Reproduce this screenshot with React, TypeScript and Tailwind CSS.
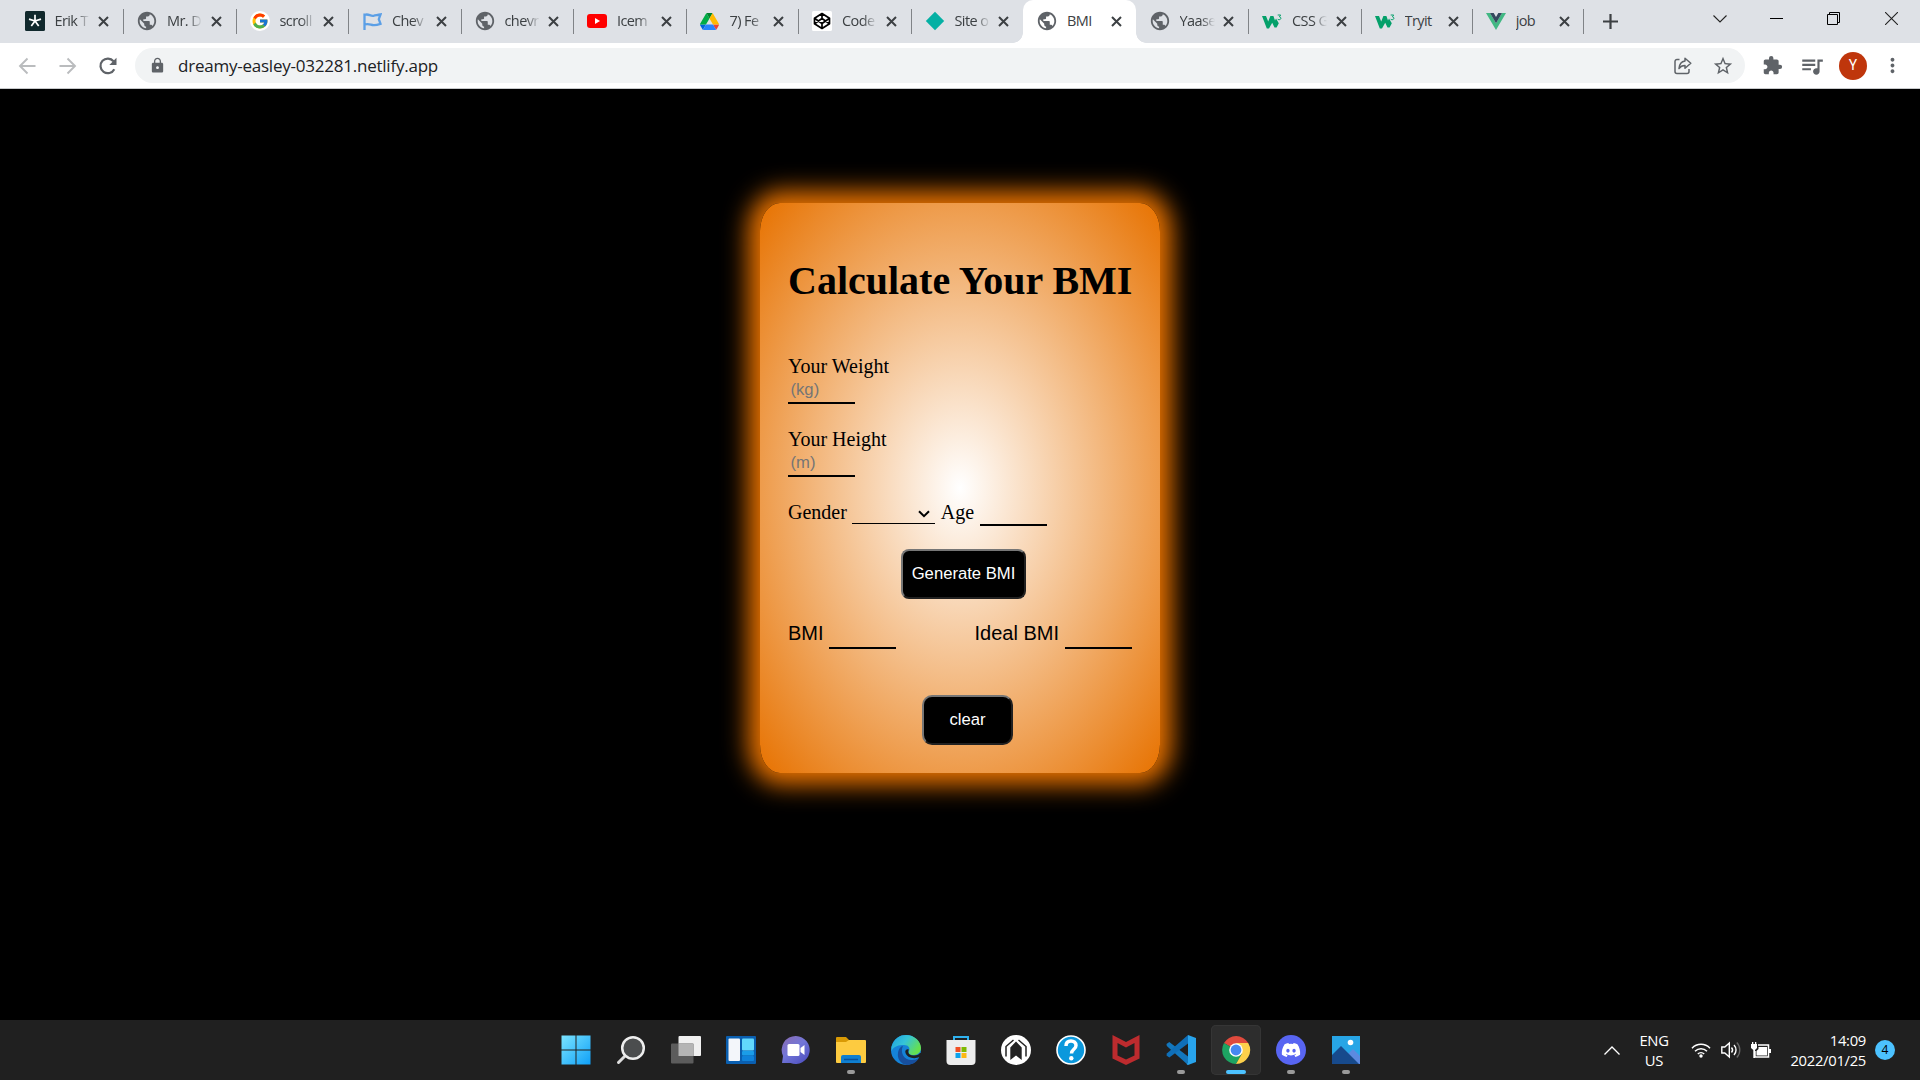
import React from 'react';
import { FcGoogle } from 'react-icons/fc';
import { FaDiscord } from 'react-icons/fa';
import { MdLock, MdExtension, MdQueueMusic, MdMoreVert, MdStarBorder, MdPublic } from 'react-icons/md';

const Globe = () => <MdPublic size={22} color="#5f6368" className="shrink-0" />;

const W3 = () => (
  <svg className="h-[15px] w-5" viewBox="0 0 20 15">
    <path d="M0 2h4l2.200 5.400L8.400 2h3l1.600 4.600L14 4.400l2.800 4.800-2.200 4.300h-2.100l-2.300-4.800L7 14.500H4.800z" fill="#04a06a" />
    <path d="M15.700 1h3l-1.300 1.800c2.200.2 1.900 3.100-.5 2.900-.7 0-1.100-.3-1.300-.8" fill="none" stroke="#04a06a" strokeWidth="1" />
  </svg>
);

const Drive = () => (
  <svg className="h-[17px] w-[19px]" viewBox="0 0 87.300 78">
    <path d="m6.600 66.850 3.850 6.650c.8 1.400 1.950 2.500 3.300 3.300l13.750-23.800h-27.500c0 1.550.4 3.100 1.200 4.500z" fill="#0066da" />
    <path d="m43.650 25-13.750-23.800c-1.350.8-2.500 1.900-3.300 3.300l-25.400 44a9.060 9.060 0 0 0 -1.200 4.500h27.500z" fill="#00ac47" />
    <path d="m73.550 76.800c1.350-.8 2.500-1.900 3.300-3.300l1.600-2.750 7.650-13.250c.8-1.400 1.200-2.950 1.200-4.500h-27.500l5.850 11.500z" fill="#ea4335" />
    <path d="m43.650 25 13.750-23.800c-1.350-.8-2.900-1.200-4.500-1.200h-18.500c-1.600 0-3.150.45-4.500 1.200z" fill="#00832d" />
    <path d="m59.800 53h-32.300l-13.750 23.800c1.350.8 2.900 1.200 4.500 1.200h50.800c1.600 0 3.150-.45 4.500-1.200z" fill="#2684fc" />
    <path d="m73.400 26.500-12.700-22c-.8-1.400-1.950-2.500-3.300-3.300l-13.750 23.800 16.150 28h27.450c0-1.550-.4-3.100-1.200-4.500z" fill="#ffba00" />
  </svg>
);

const tabs: { title: string; icon: React.ReactNode; active?: boolean }[] = [
  {
    title: 'Erik T',
    icon: (
      <svg className="size-5" viewBox="0 0 20 20">
        <rect width="20" height="20" rx="1.500" fill="#10282c" />
        <path d="M10 10V3.800M10 10l6-1.900M10 10l3.700 5M10 10l-3.700 5M10 10L4 8.100" stroke="#fff" strokeWidth="1.700" />
      </svg>
    ),
  },
  { title: 'Mr. D', icon: <Globe /> },
  {
    title: 'scroll',
    icon: (
      <span className="flex size-5 items-center justify-center rounded-full bg-white">
        <FcGoogle size={18} />
      </span>
    ),
  },
  {
    title: 'Chev',
    icon: (
      <svg className="h-[19px] w-[19px]" viewBox="0 0 19 19">
        <path d="M1.500 18V1.500M1.500 3c4-1.800 5.500 1.400 9 .8 2-.3 4-.8 7-1.300l-1.700 4.700 1.700 4.600c-3 1-5 1.500-7 1.300-3-.3-5-2-9-.6" fill="none" stroke="#5b9fe6" strokeWidth="2.300" />
      </svg>
    ),
  },
  { title: 'chevr', icon: <Globe /> },
  {
    title: 'Icem',
    icon: (
      <svg className="h-[14px] w-5" viewBox="0 0 20 14">
        <rect width="20" height="14" rx="3" fill="#f00" />
        <path d="M8 4l5 3-5 3z" fill="#fff" />
      </svg>
    ),
  },
  { title: '7) Fe', icon: <Drive /> },
  {
    title: 'Code',
    icon: (
      <svg className="size-5" viewBox="0 0 20 20">
        <rect width="20" height="20" rx="1.500" fill="#fff" />
        <path d="M10 2.500l7.500 4.800v5.400L10 17.500l-7.500-4.800V7.300zM2.500 7.300L10 12.500l7.500-5.200M2.500 12.700L10 7.500l7.500 5.200M10 2.500v5M10 12.500v5" fill="none" stroke="#000" strokeWidth="1.700" strokeLinejoin="round" />
      </svg>
    ),
  },
  {
    title: 'Site o',
    icon: (
      <svg className="size-5" viewBox="0 0 20 20">
        <path d="M10 .8L19.200 10 10 19.200.8 10z" fill="#05b0a4" />
      </svg>
    ),
  },
  { title: 'BMI', icon: <Globe />, active: true },
  { title: 'Yaase', icon: <Globe /> },
  { title: 'CSS G', icon: <W3 /> },
  { title: 'Tryit', icon: <W3 /> },
  {
    title: 'job',
    icon: (
      <svg className="h-[17px] w-5" viewBox="0 0 20 17">
        <path d="M0 0h4l6 10.300L16 0h4L10 17z" fill="#41b883" />
        <path d="M4 0h3.700L10 4l2.300-4H16l-6 10.300z" fill="#34495e" />
      </svg>
    ),
  },
];

function TabStrip() {
  return (
    <div className="flex h-[43px] bg-[#dee1e6] pl-[10.5px] font-['Open_Sans',sans-serif]">
      {tabs.map((t, i) => (
        <div
          key={i}
          className={`relative flex h-[43px] shrink-0 items-center pb-[1px] ${i > 11 ? 'w-[111.2px]' : 'w-[112.5px]'} ${t.active ? 'rounded-t-[10px] bg-white' : ''}`}
        >
          <span className="ml-3.5 flex w-5 shrink-0 justify-center">{t.icon}</span>
          <span className={`ml-2.5 w-[35px] overflow-hidden pb-px text-[14.5px] tracking-[-0.6px] whitespace-nowrap text-[#3c4043] ${['BMI', 'Tryit', 'job'].includes(t.title) ? '' : '[mask-image:linear-gradient(to_right,#000_60%,transparent)]'}`}>
            {t.title}
          </span>
          <svg className="ml-[8.5px] size-[11px]" viewBox="0 0 11 11">
            <path d="M1 1l9 9M10 1l-9 9" stroke="#3c4043" strokeWidth="2" />
          </svg>
          {!t.active && tabs[i + 1]?.active !== true && (
            <span className="absolute top-[9px] right-[-1px] h-[25px] w-px bg-[#808387]" />
          )}
          {t.active && (
            <>
              <span className="absolute bottom-0 -left-2.5 size-2.5 bg-[radial-gradient(circle_at_0_0,transparent_9.5px,#fff_10px)]" />
              <span className="absolute -right-2.5 bottom-0 size-2.5 bg-[radial-gradient(circle_at_100%_0,transparent_9.5px,#fff_10px)]" />
            </>
          )}
        </div>
      ))}
      <svg className="mt-[14px] ml-[20px] size-[15px]" viewBox="0 0 15 15">
        <path d="M7.500 0v15M0 7.500h15" stroke="#3c4043" strokeWidth="2.200" />
      </svg>
      <div className="mr-[22px] ml-auto flex h-[37px] items-center">
        <svg className="mr-[43px] h-2 w-[14px]" viewBox="0 0 14 8">
          <path d="M.5.500L7 7 13.500.5" fill="none" stroke="#222" strokeWidth="1.100" />
        </svg>
        <span className="mr-[44px] h-px w-[13px] bg-black" />
        <svg className="mr-[45px] size-[13px]" viewBox="0 0 13 13">
          <path d="M.5 2.500h10v10H.5zM2.500 2.500v-2h10v10h-2" fill="none" stroke="#000" />
        </svg>
        <svg className="size-[13px]" viewBox="0 0 13 13">
          <path d="M0 0l13 13M13 0L0 13" stroke="#222" strokeWidth="1.100" />
        </svg>
      </div>
    </div>
  );
}

function AddressBar() {
  return (
    <div className="flex h-[46px] items-center border-b border-[#c8cacc] bg-white pl-[18px]">
      <svg className="h-[18px] w-[18px]" viewBox="0 0 18 18">
        <path d="M17.500 9H2M9.500 1.500L2 9l7.500 7.500" fill="none" stroke="#babcbe" strokeWidth="1.900" />
      </svg>
      <svg className="ml-[23px] h-[18px] w-[18px]" viewBox="0 0 18 18">
        <path d="M.5 9H16M8.500 1.500L16 9l-7.500 7.500" fill="none" stroke="#babcbe" strokeWidth="1.900" />
      </svg>
      <svg className="ml-[22px] size-[18px]" viewBox="0 0 18 18">
        <path d="M15.300 12.200A7.300 7.300 0 1 1 14.500 4.300" fill="none" stroke="#5f6368" strokeWidth="2.200" />
        <path d="M17.500.8v7.200h-7.200z" fill="#5f6368" />
      </svg>
      <div className="ml-[18px] flex h-[35px] w-[1610px] items-center rounded-full bg-[#f1f3f4] pr-[11px] pl-[14px]">
        <MdLock size={17} color="#5f6368" />
        <span className="ml-3 font-['Open_Sans',sans-serif] text-[17px] tracking-[-0.23px] text-[#202124]">
          dreamy-easley-032281.netlify.app
        </span>
        <svg className="ml-auto size-[18px]" viewBox="0 0 18 18">
          <path d="M5.500 2.500H3A2 2 0 0 0 1 4.500v10a2 2 0 0 0 2 2h10a2 2 0 0 0 2-2V12" fill="none" stroke="#5f6368" strokeWidth="1.500" />
          <path d="M11 1.300l5.800 5-5.800 5V8.500c-2.800 0-4.600.8-6 3C5.300 7.800 7.300 4.500 11 4z" fill="none" stroke="#5f6368" strokeWidth="1.500" strokeLinejoin="round" />
        </svg>
        <MdStarBorder className="ml-[20px]" size={22} color="#5f6368" />
      </div>
      <MdExtension className="ml-[17px]" size={21} color="#5f6368" />
      <MdQueueMusic className="ml-[16px]" size={26} color="#5f6368" />
      <span className="ml-[14px] flex size-7 items-center justify-center rounded-full bg-[#bf360c] font-[Roboto,sans-serif] text-[14px] text-white">
        Y
      </span>
      <MdMoreVert className="ml-[14px]" size={23} color="#5f6368" />
    </div>
  );
}

const line = 'w-[67px] border-b-2 border-black bg-transparent outline-none';
const sans = "font-['Liberation_Sans',sans-serif]";

function Card() {
  return (
    <div className="h-[570px] w-[400px] rounded-[5%] bg-[radial-gradient(#fff,#e77200)] px-7 font-['Liberation_Serif',serif] text-[20px] leading-[23px] text-black shadow-[0_0_25px_12px_#e77200]">
      <h1 className="pt-[55px] text-[40px] leading-[46px] font-bold whitespace-nowrap">Calculate Your BMI</h1>
      <div className="mt-[51px]">Your Weight</div>
      <input placeholder="(kg)" className={`${line} ${sans} block h-[26px] px-[2.5px] pb-px text-[16.67px] placeholder:text-[#757575]`} />
      <div className="mt-6">Your Height</div>
      <input placeholder="(m)" className={`${line} ${sans} block h-[26px] px-[2.5px] pb-px text-[16.67px] placeholder:text-[#757575]`} />
      <div className="mt-[22px] flex h-[28px]">
        <span className="pt-[2px]">Gender</span>
        <span className="ml-[5px] flex h-[25px] w-[83px] items-center justify-end border-b border-black pr-[5px]">
          <svg className="mt-1.5 h-2 w-3" viewBox="0 0 12 8">
            <path d="M1 1.200l5 5 5-5" fill="none" stroke="#000" strokeWidth="2" />
          </svg>
        </span>
        <span className="ml-[6px] pt-[2px]">Age</span>
        <input className={`${line} ml-[6px] h-[27px]`} />
      </div>
      <button className={`${sans} mt-[22px] ml-[113px] block h-[50px] w-[125px] rounded-[8px] border-2 border-t-[#767676] border-r-[#212121] border-b-[#212121] border-l-[#767676] bg-black pb-[2px] text-[16.67px] whitespace-nowrap text-white`}>
        Generate BMI
      </button>
      <div className={`${sans} mt-[22px] flex h-[28px] justify-between`}>
        <label className="flex gap-[5px]">
          <span className="pt-px">BMI</span>
          <input className={`${line} h-[28px]`} />
        </label>
        <label className="flex gap-[6px]">
          <span className="pt-px">Ideal BMI</span>
          <input className={`${line} h-[28px]`} />
        </label>
      </div>
      <button className={`${sans} mt-[46px] ml-[134px] block h-[50px] w-[91px] rounded-[10px] border-2 border-t-[#767676] border-r-[#212121] border-b-[#212121] border-l-[#767676] bg-black pb-[2px] text-[16.67px] text-white`}>
        clear
      </button>
    </div>
  );
}

const apps: { icon: React.ReactNode; state?: 'open' | 'active' }[] = [
  {
    icon: (
      <svg viewBox="0 0 30 30">
        <defs>
          <linearGradient id="win" x1="0" y1="0" x2="1" y2="1">
            <stop offset="0" stopColor="#7be4ff" />
            <stop offset="1" stopColor="#0fa0f8" />
          </linearGradient>
        </defs>
        <path d="M.500.500h14v14H.500zM15.500.500h14v14h-14zM.500 15.500h14v14H.500zM15.500 15.500h14v14h-14z" fill="url(#win)" />
      </svg>
    ),
  },
  {
    icon: (
      <svg viewBox="0 0 30 30">
        <path d="M9 21l-6.500 6.500" stroke="#ddd" strokeWidth="3" strokeLinecap="round" />
        <circle cx="17" cy="13" r="10.800" fill="#4b4d4e" stroke="#eee" strokeWidth="2.500" />
      </svg>
    ),
  },
  {
    icon: (
      <svg viewBox="0 0 30 30">
        <rect x="7.500" y="1" width="22.500" height="20" rx="1" fill="#f0f0f0" />
        <rect x="0" y="8.500" width="22.500" height="20" rx="1" fill="#5c5c5c" />
        <path d="M7.500 8.500h15V21h-15z" fill="#b5b5b5" />
      </svg>
    ),
  },
  {
    icon: (
      <svg viewBox="0 0 30 30">
        <rect y="1" width="30" height="28" rx="1" fill="#0a5fb0" />
        <rect x="2.500" y="3.500" width="11.500" height="22.500" rx="1" fill="#f3f6fa" />
        <rect x="16" y="3.500" width="12" height="12" rx="1" fill="#62d8fc" />
        <rect x="16" y="16" width="12" height="4.500" rx="1" fill="#1b9de8" />
        <rect x="16" y="21" width="12" height="5" rx="1" fill="#0f82da" />
      </svg>
    ),
  },
  {
    icon: (
      <svg viewBox="0 0 30 30">
        <defs>
          <linearGradient id="chat" x1="0" y1="0" x2="0.800" y2="1">
            <stop offset="0" stopColor="#8c6bb0" />
            <stop offset=".5" stopColor="#7276d8" />
            <stop offset="1" stopColor="#4f50c0" />
          </linearGradient>
        </defs>
        <path d="M15 1a14 14 0 1 1-5.500 27H1l1-7A14 14 0 0 1 15 1z" fill="url(#chat)" />
        <rect x="6.500" y="9" width="12" height="12" rx="1.500" fill="#fff" />
        <path d="M19.500 13l4-3v10l-4-3z" fill="#fff" />
      </svg>
    ),
  },
  {
    state: 'open',
    icon: (
      <svg viewBox="0 0 30 30">
        <path d="M0 3a1 1 0 0 1 1-1h9l3 3v6H0z" fill="#d99a05" />
        <path d="M0 7h10l3-2h16a1 1 0 0 1 1 1v21a1 1 0 0 1-1 1H1a1 1 0 0 1-1-1z" fill="#fdcb40" />
        <path d="M5 28v-6a2 2 0 0 1 2-2h16a2 2 0 0 1 2 2v6z" fill="#0f7fd0" />
        <path d="M8 24.500h14" stroke="#07519c" strokeWidth="1.500" />
      </svg>
    ),
  },
  {
    icon: (
      <svg viewBox="0 0 30 30">
        <defs>
          <linearGradient id="edge" x1="0" y1="0" x2="1" y2=".5">
            <stop offset="0" stopColor="#1c9fe0" />
            <stop offset=".5" stopColor="#35c4d8" />
            <stop offset="1" stopColor="#65e04f" />
          </linearGradient>
        </defs>
        <circle cx="15" cy="15" r="15" fill="#1583d8" />
        <path d="M.5 12C3 3 9 0 15 0c8.500 0 15 6.500 15 13 0 4-3 7-7 7-5 0-6-2-5-4 1.500-3-.5-6-5-6C8 10 2.500 11 .5 16z" fill="url(#edge)" />
        <path d="M12 11c-3 6 0 14 9 14 3 0 5-1 7-2-3 5-8 7-12 7-7-1-10-7-9-12 .5-4 3-7 5-7z" fill="#174f9d" />
        <path d="M17.800 14.500c-1.500 3.500.2 6 5.200 6 2.500 0 4.500-.7 6-2.500l1.500 0v3.500l-2.200.5c-4.500 2.500-13 1-14-5-.2-2 1.500-3.500 3.500-2.500z" fill="#202020" />
      </svg>
    ),
  },
  {
    icon: (
      <svg viewBox="0 0 30 30">
        <path d="M8 6V2h14v4" fill="none" stroke="#2fb2ef" strokeWidth="2" />
        <path d="M.5 5h29v21a4 4 0 0 1-4 4h-21a4 4 0 0 1-4-4z" fill="#ededed" />
        <path d="M9.500 12h5v5h-5z" fill="#f04f24" />
        <path d="M15.500 12h5v5h-5z" fill="#7fb900" />
        <path d="M9.500 18h5v5h-5z" fill="#0ea3ec" />
        <path d="M15.500 18h5v5h-5z" fill="#fdb813" />
      </svg>
    ),
  },
  {
    icon: (
      <svg viewBox="0 0 30 30">
        <circle cx="15" cy="15" r="15" fill="#fff" />
        <path d="M5 21.500V11.500L12.500 5M25 21.500V11.500L17.500 5" fill="none" stroke="#222" strokeWidth="1.500" />
        <path d="M9.300 25V12.500L15 6.500l5.700 6V25L15 20.500z" fill="#222" />
      </svg>
    ),
  },
  {
    icon: (
      <svg viewBox="0 0 30 30">
        <circle cx="15" cy="15" r="14" fill="#0b98dc" stroke="#fff" strokeWidth="1.600" />
        <path d="M10 11c0-3.500 2.200-5 5-5s5 1.700 5 4.500c0 4-4.500 3.500-4.500 8" fill="none" stroke="#fff" strokeWidth="3.500" />
        <circle cx="15.300" cy="23.300" r="2.200" fill="#fff" />
      </svg>
    ),
  },
  {
    icon: (
      <svg viewBox="0 0 30 30">
        <path d="M1.500 0L15 7 28.500 0v23.500L15 30 1.500 23.500zM6.500 8v12.500L15 24.500l8.500-4V8L15 12.500z" fill="#bd2b2e" fillRule="evenodd" />
      </svg>
    ),
  },
  {
    state: 'open',
    icon: (
      <svg viewBox="0 0 30 30">
        <path d="M.5 9l2.800-2L22 21.500V30L.8 11z" fill="#1377bd" />
        <path d="M.5 20.500l2.800 2L22 8.500V0L.8 18.500z" fill="#0f6fb8" />
        <path d="M22 0l8 3v24l-8 3-1.500-1L22 28z" fill="#28a4ec" />
      </svg>
    ),
  },
  {
    state: 'active',
    icon: (
      <svg viewBox="0 0 30 30">
        <path d="M15 15L3 8a14 14 0 0 1 24.200 0z" fill="#e04a3d" />
        <path d="M15 15h0L3 8a14 14 0 0 0 12 21l6-10.500z" fill="#1da462" />
        <path d="M15 8h12.200A14 14 0 0 1 15 29l6-10.500z" fill="#fdd04b" />
        <circle cx="15" cy="15" r="6.800" fill="#fff" />
        <circle cx="15" cy="15" r="5.400" fill="#4688f1" />
      </svg>
    ),
  },
  {
    state: 'open',
    icon: (
      <span className="flex size-[30px] items-center justify-center rounded-full bg-[#5865f2]">
        <FaDiscord size={20} color="#fff" />
      </span>
    ),
  },
  {
    state: 'open',
    icon: (
      <svg viewBox="0 0 30 30">
        <path d="M1 1h28v28H1z" fill="#27a5e6" />
        <path d="M14 22l8-8 7 7v8H14z" fill="#5c8ae0" />
        <path d="M1 20l9-9 18 18H1z" fill="#174a8c" />
        <circle cx="19.500" cy="7.500" r="2.800" fill="#fff" />
      </svg>
    ),
  },
];

function Taskbar() {
  return (
    <div className="flex h-[60px] items-center bg-[#202020] pl-[551px] font-['Open_Sans',sans-serif] text-white">
      <div className="flex gap-[5px]">
        {apps.map((a, i) => (
          <div
            key={i}
            className={`relative flex size-[50px] items-center justify-center rounded-[5px] ${a.state === 'active' ? 'bg-[#2d2d2d] ring-1 ring-[#353535] ring-inset' : ''}`}
          >
            <span className="size-[30px]">{a.icon}</span>
            {a.state === 'open' && <span className="absolute bottom-px left-[21px] h-1 w-2 rounded-full bg-[#9a9a9a]" />}
            {a.state === 'active' && <span className="absolute bottom-px left-[15px] h-1 w-5 rounded-full bg-[#4cc2ff]" />}
          </div>
        ))}
      </div>
      <div className="mr-[25px] ml-auto flex items-center">
        <svg className="h-[9px] w-4" viewBox="0 0 16 9">
          <path d="M.5 8.500L8 1l7.500 7.500" fill="none" stroke="#fff" strokeWidth="1.300" />
        </svg>
        <div className="ml-[19px] w-[30px] text-center text-[14.8px] leading-5 tracking-[-0.3px]">
          ENG
          <br />
          US
        </div>
        <svg className="ml-[22px] h-4 w-5" viewBox="0 0 20 16">
          <path d="M1 6.200a12.500 12.500 0 0 1 18 0M4 9.200a8.500 8.500 0 0 1 12 0M6.800 12a4.600 4.600 0 0 1 6.400 0" fill="none" stroke="#fff" strokeWidth="1.500" />
          <circle cx="10" cy="14" r="1.700" fill="#fff" />
        </svg>
        <svg className="ml-[10px] h-[18px] w-5" viewBox="0 0 20 18">
          <path d="M.8 6h3l4.500-4v14L3.800 12h-3z" fill="none" stroke="#fff" strokeWidth="1.400" />
          <path d="M10.500 6.500c1.300 1.500 1.300 3.500 0 5M13 4c2.700 2.800 2.700 7.200 0 10" fill="none" stroke="#fff" strokeWidth="1.400" />
          <path d="M15.800 1.500c4 4.200 4 10.800 0 15" fill="none" stroke="#666" strokeWidth="1.300" />
        </svg>
        <svg className="ml-[10px] h-4 w-5" viewBox="0 0 20 16">
          <path d="M7 3h10.500v12H4V9" fill="none" stroke="#fff" strokeWidth="1.500" />
          <path d="M7.500 5h8.500v8.500H5.500V9L7.500 7zM18 7h2v4h-2zM0 2h6v4L4 8v8H2.300V8L0 6zM1 0h1.300v2H1zM4 0h1.300v2H4z" fill="#fff" />
        </svg>
        <div className="ml-[19px] w-[76px] text-right text-[14.8px] leading-5 tracking-[-0.3px] whitespace-nowrap">
          <div className="-mt-px">14:09</div>
          2022/01/25
        </div>
        <span className="ml-[9px] flex size-5 items-center justify-center rounded-full bg-[#4cc2ff] text-[12px] text-black">4</span>
      </div>
    </div>
  );
}

export default function App() {
  return (
    <div className="flex h-[1080px] w-[1920px] flex-col overflow-hidden bg-black">
      <TabStrip />
      <AddressBar />
      <main className="flex flex-1 justify-center bg-black pt-[114px]">
        <Card />
      </main>
      <Taskbar />
    </div>
  );
}
